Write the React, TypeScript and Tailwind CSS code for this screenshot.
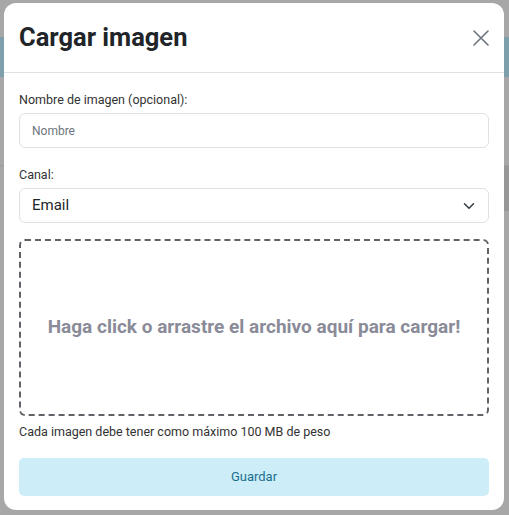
export default function App() {
  return (
    <div className="relative h-[515px] w-[509px] overflow-hidden bg-[#a7a7a7] font-['Roboto',sans-serif]">
      {/* page behind the overlay */}
      <div className="flex flex-col">
        <div className="h-[37px]" />
        <div className="h-[40px] bg-[#7d9fab]" />
        <div className="h-[88px]" />
        <div className="h-px bg-[#9c9c9c]" />
        <div className="flex h-[45px] justify-end">
          <div className="w-[6px] bg-[#979797]" />
        </div>
      </div>

      <div className="absolute left-[4px] top-[3px] flex h-[507px] w-[500px] flex-col rounded-[12px] bg-white">
        <div className="flex h-[70px] items-center justify-between border-b border-[#dee2e6] pl-[15px] pr-[15px]">
          <h2 className="text-[25.5px] font-bold leading-none text-[#212529]">Cargar imagen</h2>
          <svg width="16" height="16" viewBox="0 0 16 16" className="text-[#6c757d]">
            <path d="M1 1L15 15M15 1L1 15" stroke="currentColor" strokeWidth="1.6" strokeLinecap="round" />
          </svg>
        </div>

        <div className="flex flex-col px-[15px] pt-[19px]">
          <label className="text-[12.5px] leading-[16px] text-[#333]">Nombre de imagen (opcional):</label>
          <div className="mt-[5px] flex h-[35px] items-center rounded-[6px] border border-[#dee2e6] px-[12px]">
            <span className="text-[12px] text-[#6c757d]">Nombre</span>
          </div>

          <label className="mt-[19px] text-[12.5px] leading-[16px] text-[#333]">Canal:</label>
          <div className="mt-[5px] flex h-[35px] items-center justify-between rounded-[6px] border border-[#dee2e6] pl-[12px] pr-[13px]">
            <span className="text-[15px] text-[#212529]">Email</span>
            <svg width="12" height="12" viewBox="0 0 16 16" className="text-[#343a40]">
              <path d="M2 5l6 6 6-6" fill="none" stroke="currentColor" strokeWidth="2" strokeLinecap="round" strokeLinejoin="round" />
            </svg>
          </div>

          <div className="mt-[16px] flex h-[177px] items-center justify-center rounded-[6px] border-2 border-dashed border-[#5f6368]">
            <span className="text-[19px] font-bold text-[#8a8b98]">
              Haga click o arrastre el archivo aquí para cargar!
            </span>
          </div>

          <p className="mt-[8px] text-[12.5px] leading-[15px] text-[#333]">
            Cada imagen debe tener como máximo 100 MB de peso
          </p>

          <button className="mt-[19px] flex h-[38px] items-center justify-center rounded-[5px] bg-[#cdeef8] text-[13px] text-[#1b6e8f]">
            Guardar
          </button>
        </div>
      </div>
    </div>
  )
}
